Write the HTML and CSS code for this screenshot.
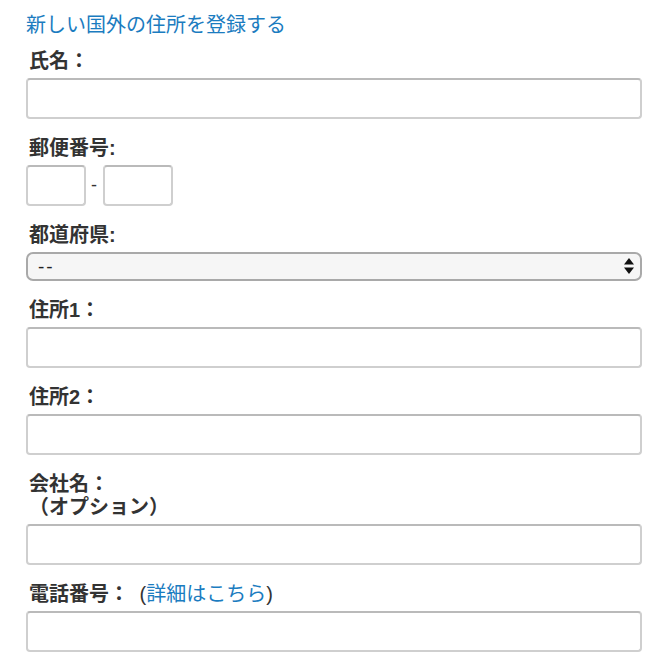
FILE: index.html
```html
<!DOCTYPE html>
<html lang="ja">

<head>
    <meta charset="UTF-8" />
    <meta name="viewport" content="width=device-width, initial-scale=1.0" />
    <title>新しい国外の住所を登録する</title>
    <link rel="stylesheet" href="styles.css">
</head>

<body>
    <div class="page">
        <a class="title" href="#">新しい国外の住所を登録する</a>

        <form class="address-form">
            <label for="name">氏名：</label>
            <input type="text" id="name" class="text-input" />

            <label for="zip1">郵便番号:</label>
            <div class="zip-row">
                <input type="text" id="zip1" class="text-input zip-first" />
                <span class="zip-sep">-</span>
                <input type="text" id="zip2" class="text-input zip-second" />
            </div>

            <label for="pref">都道府県:</label>
            <div class="select-wrap">
                <select id="pref" class="select-input">
                    <option>--</option>
                </select>
                <svg class="select-arrows" width="10" height="16" viewBox="0 0 10 16">
                    <path d="M5 0 L10 6.5 L0 6.5 Z" fill="#111" />
                    <path d="M0 9.5 L10 9.5 L5 16 Z" fill="#111" />
                </svg>
            </div>

            <label for="addr1">住所1：</label>
            <input type="text" id="addr1" class="text-input" />

            <label for="addr2">住所2：</label>
            <input type="text" id="addr2" class="text-input" />

            <label for="company">会社名：<br>（オプション）</label>
            <input type="text" id="company" class="text-input" />

            <label for="phone">電話番号：<span class="help"> (<a href="#">詳細はこちら</a>)</span></label>
            <input type="text" id="phone" class="text-input" />
        </form>
    </div>
</body>

</html>
```

FILE: styles.css
```css
body {
    margin: 0;
    font-family: "Liberation Sans", "Noto Sans CJK JP", sans-serif;
    background-color: #ffffff;
    color: #333333;
}

.page {
    padding: 13px 22px 0 26px;
}

.title {
    display: block;
    font-size: 20px;
    line-height: 24px;
    color: #1b7cc0;
    text-decoration: none;
    margin-bottom: 13px;
}

.address-form label {
    display: block;
    font-size: 20px;
    line-height: 23px;
    font-weight: bold;
    color: #333333;
    padding-left: 3px;
    margin-bottom: 5px;
}

.text-input {
    display: block;
    box-sizing: border-box;
    width: 100%;
    height: 41px;
    margin: 0 0 18px 0;
    padding: 0 8px;
    border: 2px solid #cfcfcf;
    border-top-color: #bababa;
    border-radius: 4px;
    background-color: #ffffff;
    font-size: 18px;
    outline: none;
}

.zip-row {
    display: flex;
    align-items: center;
    gap: 5px;
    margin-bottom: 18px;
}

.zip-row .text-input {
    margin: 0;
}

.zip-first {
    width: 60px;
}

.zip-second {
    width: 70px;
    margin-left: 1px !important;
}

.zip-sep {
    font-size: 18px;
    color: #333333;
}

.select-wrap {
    position: relative;
    margin-bottom: 18px;
}

.select-input {
    display: block;
    box-sizing: border-box;
    width: 100%;
    height: 29px;
    padding: 0 10px;
    border: 2px solid #a9a9a9;
    border-radius: 7px;
    background-color: #f6f6f6;
    font-family: "Liberation Sans", sans-serif;
    font-size: 19px;
    letter-spacing: 2px;
    color: #222222;
    -webkit-appearance: none;
    appearance: none;
    outline: none;
}

.select-arrows {
    position: absolute;
    right: 8px;
    top: 6px;
}

.help {
    font-weight: normal;
    margin-left: 5px;
}

.help a {
    color: #1b7cc0;
    text-decoration: none;
}
```
